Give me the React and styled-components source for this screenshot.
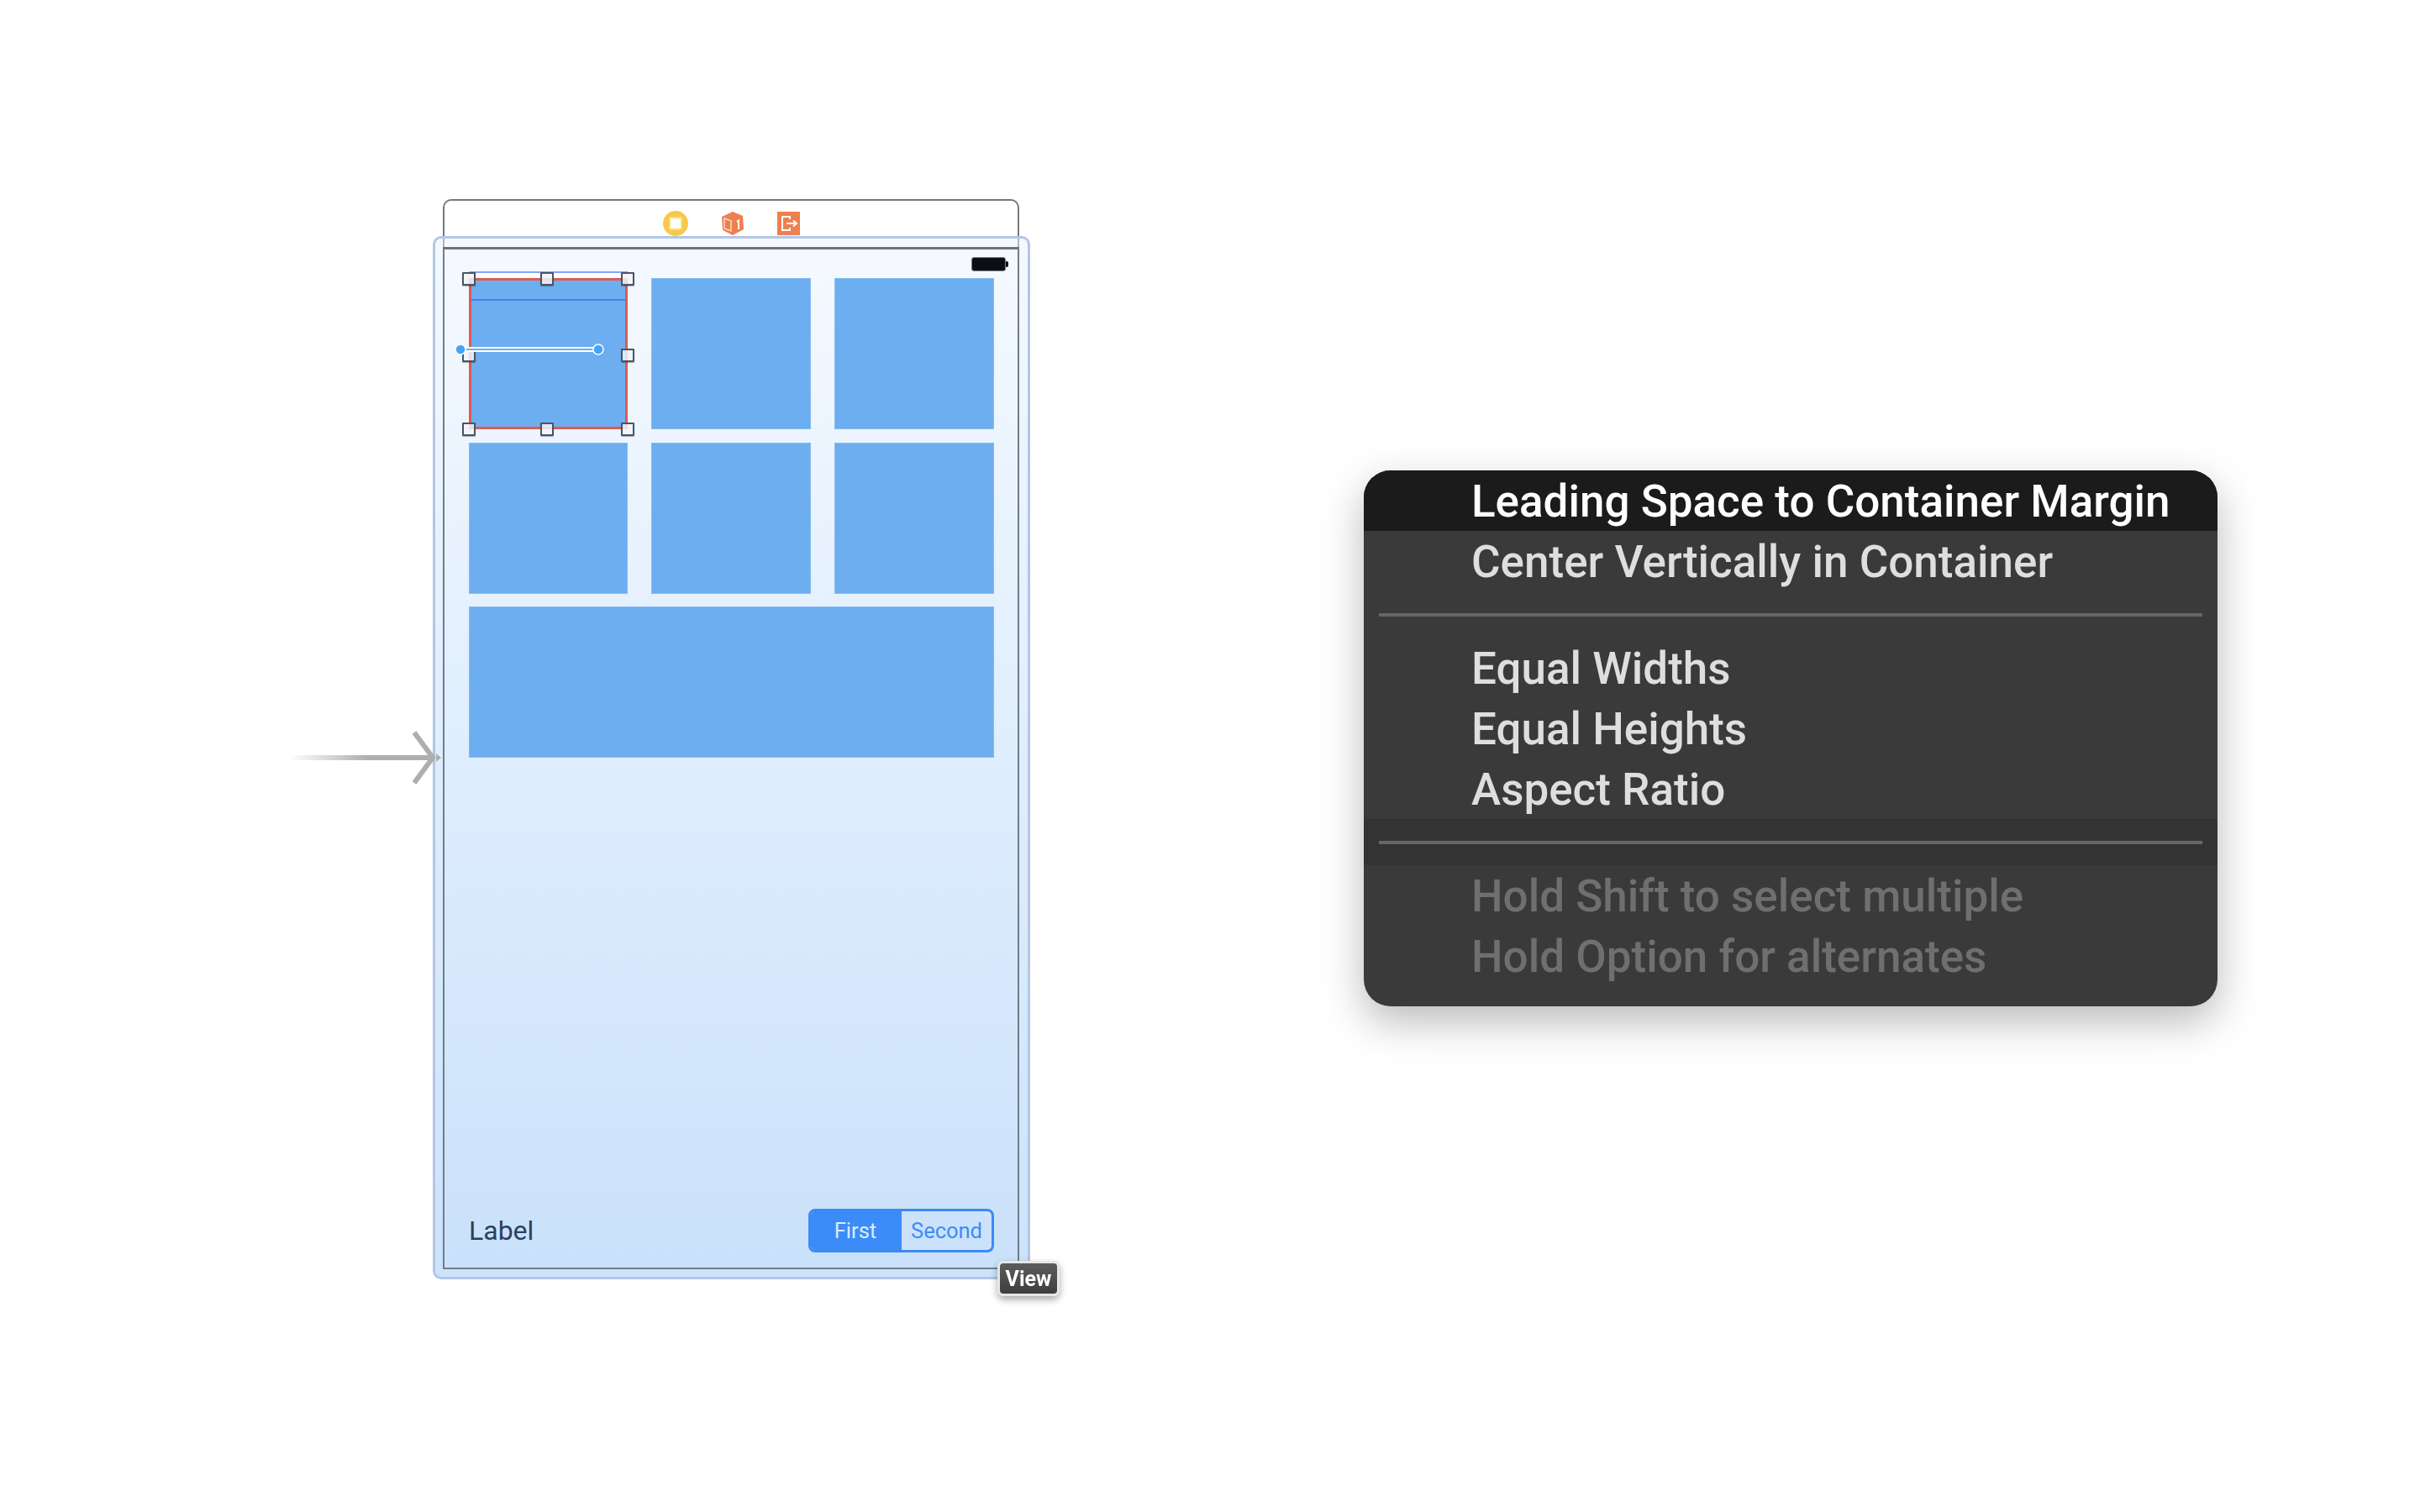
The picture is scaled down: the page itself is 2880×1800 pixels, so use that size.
import React from "react";
import styled, { createGlobalStyle } from "styled-components";

const Global = createGlobalStyle`
  html, body { margin: 0; padding: 0; background: #fff; }
  body { font-family: "Roboto", "Liberation Sans", sans-serif; }
`;

const Canvas = styled.div`
  width: 2880px;
  height: 1800px;
  box-sizing: border-box;
  padding: 237px 0 0 515px;
  display: flex;
  align-items: flex-start;
  overflow: hidden;
  filter: blur(0.7px);
`;

// scene
const Scene = styled.div`
  position: relative;
  width: 711px;
  flex: none;
  display: flex;
  flex-direction: column;
`;
const Dock = styled.div`
  margin: 0 13px 0 12px;
  height: 57px;
  box-sizing: border-box;
  border: 2px solid #75787c;
  border-bottom: 0;
  border-radius: 10px 10px 0 0;
  display: flex;
  justify-content: center;
  gap: 40px;
  padding-top: 13px;
`;
const Frame = styled.div`
  position: relative;
  margin-top: -13px;
  padding: 10px 10px 9px 9px;
  border: 3px solid #b3c6e6;
  border-radius: 10px;
  background: linear-gradient(rgba(232, 242, 255, 0.5), rgba(201, 225, 251, 0.95));
`;
const View = styled.div`
  height: 1217px;
  box-sizing: border-box;
  border: 2px solid #6f7d8a;
  border-top: 3px solid #6f7377;
  background: linear-gradient(#f5f9ff, #e3f0fe 40%, #cae1fb);
  display: flex;
  flex-direction: column;
`;
const StatusRow = styled.div`
  height: 34px;
  padding-right: 11px;
  display: flex;
  justify-content: flex-end;
  align-items: center;
`;
const Battery = styled.div`
  position: relative;
  width: 41px;
  height: 17px;
  box-sizing: border-box;
  border: 1px solid #7d8288;
  border-radius: 3px;
  background: #0b0f13;
  margin-right: 3px;
  &::after {
    content: "";
    position: absolute;
    right: -4px;
    top: 4px;
    width: 3px;
    height: 7px;
    border-radius: 0 2px 2px 0;
    background: #0b0f13;
  }
`;
const TileGrid = styled.div`
  padding: 0 0 0 29px;
  display: grid;
  grid-template-columns: 189px 190px 190px;
  grid-auto-rows: 180px;
  column-gap: 28px;
  row-gap: 15.5px;
`;
const Tile = styled.div`
  position: relative;
  background: #6daef0;
  box-shadow: inset 0 0 0 1px #84bbf2;
  grid-column: ${(p) => (p.$wide ? "1 / -1" : "auto")};
`;
const BottomRow = styled.div`
  margin-top: auto;
  padding: 0 28px 18px 29px;
  display: flex;
  justify-content: space-between;
  align-items: center;
`;
const Label = styled.div`
  font-size: 32px;
  color: #2a4160;
`;
const Segmented = styled.div`
  width: 221px;
  height: 52px;
  box-sizing: border-box;
  border: 3px solid #3b8af5;
  border-radius: 8px;
  overflow: hidden;
  display: flex;
`;
const Segment = styled.div`
  flex: none;
  width: ${(p) => (p.$on ? "106px" : "auto")};
  flex-grow: ${(p) => (p.$on ? 0 : 1)};
  margin-right: ${(p) => (p.$on ? "2px" : "0")};
  background: ${(p) => (p.$on ? "#3b8cf9" : "transparent")};
  box-shadow: ${(p) => (p.$on ? "2px 0 0 #3b8cf9" : "none")};
  color: ${(p) => (p.$on ? "#dcebff" : "#3b8cf9")};
  font-size: 25.5px;
  display: flex;
  align-items: center;
  justify-content: center;
`;

// selection of the first tile
const SelectionBar = styled.div`
  position: absolute;
  left: 0;
  right: 0;
  top: -8px;
  height: 8px;
  box-sizing: border-box;
  background: #fff;
  border-top: 2px solid #85a5f8;
`;
const SelectionBox = styled.div`
  position: absolute;
  inset: 0;
  border: 3px solid #df5a50;
`;
const GuideLine = styled.div`
  position: absolute;
  left: 2px;
  right: 2px;
  top: 25px;
  height: 2px;
  background: #3f80ef;
`;
const Handle = styled.div`
  position: absolute;
  left: ${(p) => p.$x}%;
  top: ${(p) => p.$y}%;
  width: 12px;
  height: 12px;
  transform: translate(-50%, -50%);
  border: 2px solid #4a5563;
  border-radius: 1px;
  background: rgba(240, 244, 250, 0.85);
  box-shadow: 0 1px 1px rgba(0, 0, 0, 0.3);
`;
const ConstraintSvg = styled.svg`
  position: absolute;
  left: -20px;
  top: 73px;
`;
const ArrowSvg = styled.svg`
  position: absolute;
  left: -170px;
  top: 627px;
`;
const ViewBadge = styled.div`
  position: absolute;
  left: 672px;
  top: 1264px;
  width: 74px;
  height: 42px;
  box-sizing: border-box;
  border: 3px solid #e6e6e6;
  border-radius: 7px;
  background: linear-gradient(#5c5c5c, #3e3e3e);
  box-shadow: 0 4px 8px rgba(0, 0, 0, 0.35);
  color: #fff;
  font-size: 25px;
  font-weight: 700;
  display: flex;
  align-items: center;
  justify-content: center;
`;

// popup menu
const Menu = styled.div`
  flex: none;
  width: 1016px;
  height: 638px;
  margin: 323px 0 0 397px;
  box-sizing: border-box;
  border-radius: 32px;
  overflow: hidden;
  background: #3a3a3a;
  box-shadow: 0 18px 50px rgba(0, 0, 0, 0.28);
`;
const MenuItem = styled.div`
  height: 72px;
  box-sizing: border-box;
  padding: 2px 0 0 128px;
  display: flex;
  align-items: center;
  font-size: 53px;
  font-weight: 500;
  background: ${(p) => (p.$active ? "#1b1b1b" : "transparent")};
  color: ${(p) => (p.$active ? "#fff" : p.$dim ? "#6f6f6f" : "#dedede")};
`;
const MenuDivider = styled.div`
  height: 55px;
  padding: 0 18px;
  display: flex;
  align-items: center;
  background: ${(p) => (p.$band ? "#333" : "transparent")};
  &::before {
    content: "";
    flex: 1;
    height: 4px;
    background: #666;
  }
`;
const VcSvg = styled.svg`
  margin-top: -1px;
`;

const BoxIcon = () => (
  <svg width="26" height="28" viewBox="0 0 26 28">
    <path d="M13 0 25 5 26 21 13 28 1 22 0 6Z" fill="#ee8050" />
    <path d="M3 8 11 11V23L3 20Z" fill="none" stroke="#fbd9c8" strokeWidth="1.5" />
    <path d="M18 12l2-1.5V21" fill="none" stroke="#fff" strokeWidth="2" />
  </svg>
);

const ExitIcon = () => (
  <svg width="27" height="28" viewBox="0 0 27 28">
    <rect width="27" height="28" fill="#ee8050" />
    <path d="M15 9V6H6V22H15V19" fill="none" stroke="#fff" strokeWidth="2" />
    <path d="M11 14H22M19 10.5 23 14 19 17.5" fill="none" stroke="#fff" strokeWidth="2" />
  </svg>
);

const VcIcon = () => (
  <VcSvg width="30" height="30" viewBox="0 0 30 30">
    <circle cx="15" cy="15" r="15" fill="#f7c948" />
    <rect x="8.5" y="8.5" width="13" height="13" fill="#fff" stroke="#fde9a8" strokeWidth="2" strokeDasharray="2 1" />
  </VcSvg>
);

const handles = [
  [0, 0.5], [49, 0.5], [100, 0.5],
  [0, 51], [100, 51],
  [0, 100], [49, 100], [100, 100],
];

const App = () => {
  return (
    <Canvas>
      <Global />
      <Scene>
        <Dock>
          <VcIcon />
          <BoxIcon />
          <ExitIcon />
        </Dock>
        <Frame>
          <View>
            <StatusRow>
              <Battery />
            </StatusRow>
            <TileGrid>
              <Tile>
                <SelectionBar />
                <GuideLine />
                <SelectionBox />
                {handles.map(([x, y]) => (
                  <Handle key={`${x}-${y}`} $x={x} $y={y} />
                ))}
                <ConstraintSvg width="190" height="24" viewBox="0 0 190 24">
                  <line x1="10" y1="12" x2="174" y2="12" stroke="#fff" strokeWidth="6" />
                  <line x1="10" y1="12" x2="174" y2="12" stroke="#6daef0" strokeWidth="2" />
                  <circle cx="10" cy="12" r="6" fill="#46a4f5" stroke="#fff" strokeWidth="1.5" />
                  <circle cx="174" cy="12" r="6" fill="#46a4f5" stroke="#fff" strokeWidth="1.5" />
                </ConstraintSvg>
              </Tile>
              <Tile />
              <Tile />
              <Tile />
              <Tile />
              <Tile />
              <Tile $wide />
            </TileGrid>
            <BottomRow>
              <Label>Label</Label>
              <Segmented>
                <Segment $on>First</Segment>
                <Segment>Second</Segment>
              </Segmented>
            </BottomRow>
          </View>
        </Frame>
        <ArrowSvg width="180" height="76" viewBox="0 0 180 76">
          <defs>
            <linearGradient id="segue" x1="0" x2="1" y1="0" y2="0">
              <stop offset="0" stopColor="#aeaeae" stopOpacity="0" />
              <stop offset="0.55" stopColor="#aeaeae" />
            </linearGradient>
          </defs>
          <rect x="0" y="35" width="170" height="6" fill="url(#segue)" />
          <path d="M148 8 170 38 148 68" fill="none" stroke="#aeaeae" strokeWidth="6" />
          <path d="M174 33 180 38 174 43Z" fill="#aeaeae" />
        </ArrowSvg>
        <ViewBadge>View</ViewBadge>
      </Scene>
      <Menu>
        <MenuItem $active>Leading Space to Container Margin</MenuItem>
        <MenuItem>Center Vertically in Container</MenuItem>
        <MenuDivider />
        <MenuItem>Equal Widths</MenuItem>
        <MenuItem>Equal Heights</MenuItem>
        <MenuItem>Aspect Ratio</MenuItem>
        <MenuDivider $band />
        <MenuItem $dim>Hold Shift to select multiple</MenuItem>
        <MenuItem $dim>Hold Option for alternates</MenuItem>
      </Menu>
    </Canvas>
  );
};

export default App;
